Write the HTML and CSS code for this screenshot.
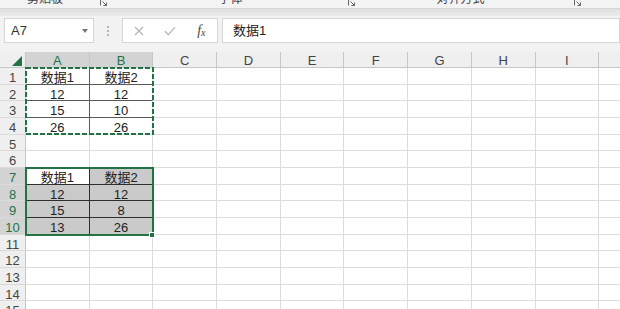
FILE: index.html
```html
<!DOCTYPE html>
<html lang="zh-CN">
<head>
  <meta charset="UTF-8">
  <meta name="viewport" content="width=device-width, initial-scale=1.0">
  <title>工作簿1 - Excel</title>
  <link rel="stylesheet" href="styles.css">
</head>
<body>
  <div class="ribbon">
    <div class="group g1">
      <span class="group-label">剪贴板</span>
      <svg class="launcher" width="8" height="8" viewBox="0 0 8 8"><path d="M0.5 6.5V0.5H6.5M2.5 2.5L6.5 6.5M3.5 6.5H6.5V3.5" fill="none" stroke="#666" stroke-width="1"/></svg>
    </div>
    <div class="group g2">
      <span class="group-label">字体</span>
      <svg class="launcher" width="8" height="8" viewBox="0 0 8 8"><path d="M0.5 6.5V0.5H6.5M2.5 2.5L6.5 6.5M3.5 6.5H6.5V3.5" fill="none" stroke="#666" stroke-width="1"/></svg>
    </div>
    <div class="group g3">
      <span class="group-label">对齐方式</span>
      <svg class="launcher" width="8" height="8" viewBox="0 0 8 8"><path d="M0.5 6.5V0.5H6.5M2.5 2.5L6.5 6.5M3.5 6.5H6.5V3.5" fill="none" stroke="#666" stroke-width="1"/></svg>
    </div>
  </div>
  <div class="band"></div>

  <div class="formula-bar">
    <div class="name-box"><span>A7</span><span class="caret"></span></div>
    <div class="grip">
      <svg width="4" height="12" viewBox="0 0 4 12"><circle cx="2" cy="2" r="0.9" fill="#9a9a9a"/><circle cx="2" cy="6" r="0.9" fill="#9a9a9a"/><circle cx="2" cy="10" r="0.9" fill="#9a9a9a"/></svg>
    </div>
    <div class="fx-buttons">
      <span class="fx-btn"><svg width="10" height="10" viewBox="0 0 10 10"><path d="M1 1L9 9M9 1L1 9" stroke="#b4b4b4" stroke-width="1.2"/></svg></span>
      <span class="fx-btn"><svg width="12" height="10" viewBox="0 0 12 10"><path d="M1 5.2L4.4 8.6L11 1.4" fill="none" stroke="#b4b4b4" stroke-width="1.3"/></svg></span>
      <span class="fx-btn fx"><i>f</i><i class="x">x</i></span>
    </div>
    <div class="formula-input">数据1</div>
  </div>

  <div class="sheet">
    <div class="grid">
      <div class="corner"><svg width="26" height="16" viewBox="0 0 26 16"><path d="M12 14L22 4V14Z" fill="#217346"/></svg></div>
      <div class="hd sel">A</div><div class="hd sel">B</div><div class="hd">C</div><div class="hd">D</div><div class="hd">E</div><div class="hd">F</div><div class="hd">G</div><div class="hd">H</div><div class="hd">I</div><div class="hd">J</div>

      <div class="rh">1</div><div class="c dr db">数据1</div><div class="c db">数据2</div><div class="c"></div><div class="c"></div><div class="c"></div><div class="c"></div><div class="c"></div><div class="c"></div><div class="c"></div><div class="c"></div>
      <div class="rh">2</div><div class="c dr db">12</div><div class="c db">12</div><div class="c"></div><div class="c"></div><div class="c"></div><div class="c"></div><div class="c"></div><div class="c"></div><div class="c"></div><div class="c"></div>
      <div class="rh">3</div><div class="c dr db">15</div><div class="c db">10</div><div class="c"></div><div class="c"></div><div class="c"></div><div class="c"></div><div class="c"></div><div class="c"></div><div class="c"></div><div class="c"></div>
      <div class="rh">4</div><div class="c dr">26</div><div class="c">26</div><div class="c"></div><div class="c"></div><div class="c"></div><div class="c"></div><div class="c"></div><div class="c"></div><div class="c"></div><div class="c"></div>
      <div class="rh">5</div><div class="c"></div><div class="c"></div><div class="c"></div><div class="c"></div><div class="c"></div><div class="c"></div><div class="c"></div><div class="c"></div><div class="c"></div><div class="c"></div>
      <div class="rh">6</div><div class="c"></div><div class="c"></div><div class="c"></div><div class="c"></div><div class="c"></div><div class="c"></div><div class="c"></div><div class="c"></div><div class="c"></div><div class="c"></div>
      <div class="rh sel">7</div><div class="c dk dr db">数据1</div><div class="c dk db fill">数据2</div><div class="c"></div><div class="c"></div><div class="c"></div><div class="c"></div><div class="c"></div><div class="c"></div><div class="c"></div><div class="c"></div>
      <div class="rh sel">8</div><div class="c dk dr db fill">12</div><div class="c dk db fill">12</div><div class="c"></div><div class="c"></div><div class="c"></div><div class="c"></div><div class="c"></div><div class="c"></div><div class="c"></div><div class="c"></div>
      <div class="rh sel">9</div><div class="c dk dr db fill">15</div><div class="c dk db fill">8</div><div class="c"></div><div class="c"></div><div class="c"></div><div class="c"></div><div class="c"></div><div class="c"></div><div class="c"></div><div class="c"></div>
      <div class="rh sel">10</div><div class="c dk dr fill">13</div><div class="c dk fill">26</div><div class="c"></div><div class="c"></div><div class="c"></div><div class="c"></div><div class="c"></div><div class="c"></div><div class="c"></div><div class="c"></div>
      <div class="rh">11</div><div class="c"></div><div class="c"></div><div class="c"></div><div class="c"></div><div class="c"></div><div class="c"></div><div class="c"></div><div class="c"></div><div class="c"></div><div class="c"></div>
      <div class="rh">12</div><div class="c"></div><div class="c"></div><div class="c"></div><div class="c"></div><div class="c"></div><div class="c"></div><div class="c"></div><div class="c"></div><div class="c"></div><div class="c"></div>
      <div class="rh">13</div><div class="c"></div><div class="c"></div><div class="c"></div><div class="c"></div><div class="c"></div><div class="c"></div><div class="c"></div><div class="c"></div><div class="c"></div><div class="c"></div>
      <div class="rh">14</div><div class="c"></div><div class="c"></div><div class="c"></div><div class="c"></div><div class="c"></div><div class="c"></div><div class="c"></div><div class="c"></div><div class="c"></div><div class="c"></div>
      <div class="rh">15</div><div class="c"></div><div class="c"></div><div class="c"></div><div class="c"></div><div class="c"></div><div class="c"></div><div class="c"></div><div class="c"></div><div class="c"></div><div class="c"></div>
    </div>

    <!-- copied range A1:B4 -->
    <div class="copy-marquee">
      <svg width="129" height="68" viewBox="0 0 129 68"><rect x="1" y="1" width="127" height="66" fill="none" stroke="#217346" stroke-width="2" stroke-dasharray="5 2"/></svg>
    </div>
    <!-- selected range A7:B10 -->
    <div class="selection"><span class="fill-handle"></span></div>
  </div>
</body>
</html>
```

FILE: styles.css
```css
body {
  margin: 0;
  width: 620px;
  height: 309px;
  overflow: hidden;
  background: #ffffff;
  font-family: "Liberation Sans", "Noto Sans CJK SC", sans-serif;
  color: #222222;
}
.ribbon {
  display: flex;
  height: 8px;
  background: #f3f3f3;
  border-bottom: 1px solid #d6d6d6;
  overflow: hidden;
}
.group {
  display: flex;
  align-items: flex-start;
}
.g1 { width: 113px; }
.g2 { width: 248px; }
.g3 { width: 226px; }
.group-label {
  flex: 1;
  margin-top: -8px;
  font-size: 12px;
  line-height: 14px;
  text-align: center;
  color: #444444;
}
.g1 .group-label { padding-right: 10px; }
.g3 .group-label { padding-right: 14px; }
.launcher {
  margin-top: -1px;
  margin-right: 5px;
}
.band {
  height: 7px;
  background: linear-gradient(to bottom, #e0e0e0, #ebebeb);
}
.formula-bar {
  display: flex;
  align-items: flex-start;
  height: 34px;
  padding-top: 2px;
  background: #f2f2f2;
}
.name-box, .fx-buttons, .formula-input {
  box-sizing: border-box;
  height: 25px;
  background: #ffffff;
  border: 1px solid #d6d6d6;
}
.name-box {
  display: flex;
  align-items: center;
  justify-content: space-between;
  width: 90px;
  margin-left: 4px;
  padding: 0 5px 0 6px;
  font-size: 13px;
  color: #333333;
}
.caret {
  width: 0;
  height: 0;
  border-left: 3.5px solid transparent;
  border-right: 3.5px solid transparent;
  border-top: 4px solid #777777;
}
.grip {
  display: flex;
  justify-content: center;
  width: 28px;
  padding-top: 7px;
}
.fx-buttons {
  display: flex;
  width: 96px;
}
.fx-btn {
  display: flex;
  align-items: center;
  justify-content: center;
  width: 32px;
}
.fx {
  font-family: "Liberation Serif", serif;
  font-size: 14px;
  color: #444444;
}
.fx .x {
  font-size: 10px;
  margin-top: 3px;
}
.formula-input {
  flex: 1;
  padding-left: 10px;
  margin-left: 4px;
  font-size: 13px;
  line-height: 23px;
  color: #222222;
}
.sheet {
  position: relative;
}
.grid {
  display: grid;
  grid-template-columns: 26px repeat(10, 63.7px);
  grid-template-rows: 16px repeat(15, 16.67px);
}
.grid > div {
  box-sizing: border-box;
  overflow: hidden;
  white-space: nowrap;
  text-align: center;
}
.corner, .hd {
  background: #efefef;
  border-right: 1px solid #c6c6c6;
  border-bottom: 1px solid #c6c6c6;
}
.corner svg {
  display: block;
}
.hd {
  padding-top: 1px;
  font-size: 13px;
  line-height: 16px;
  color: #444444;
}
.rh {
  background: #efefef;
  border-right: 1px solid #c6c6c6;
  border-bottom: 1px solid #dadada;
  padding-top: 2px;
  font-size: 13px;
  line-height: 15px;
  color: #444444;
}
.sel {
  background: #d3d3d3;
  color: #217346;
}
.c {
  border-right: 1px solid #dcdcdc;
  border-bottom: 1px solid #dcdcdc;
  padding-top: 2px;
  font-size: 13px;
  line-height: 15px;
}
.c.dr { border-right-color: #5a5a5a; }
.c.db { border-bottom-color: #5a5a5a; }
.c.dk.dr { border-right-color: #2e2e2e; }
.c.dk.db { border-bottom-color: #2e2e2e; }
.fill {
  background: #cacaca;
}
.copy-marquee {
  position: absolute;
  left: 25px;
  top: 15px;
  width: 129px;
  height: 68px;
}
.copy-marquee svg {
  display: block;
}
.selection {
  position: absolute;
  left: 25px;
  top: 115px;
  width: 129px;
  height: 69px;
  box-sizing: border-box;
  border: 2px solid #217346;
}
.fill-handle {
  position: absolute;
  right: -3px;
  bottom: -4px;
  width: 6px;
  height: 6px;
  box-sizing: border-box;
  background: #217346;
  border: 1px solid #ffffff;
}
```
